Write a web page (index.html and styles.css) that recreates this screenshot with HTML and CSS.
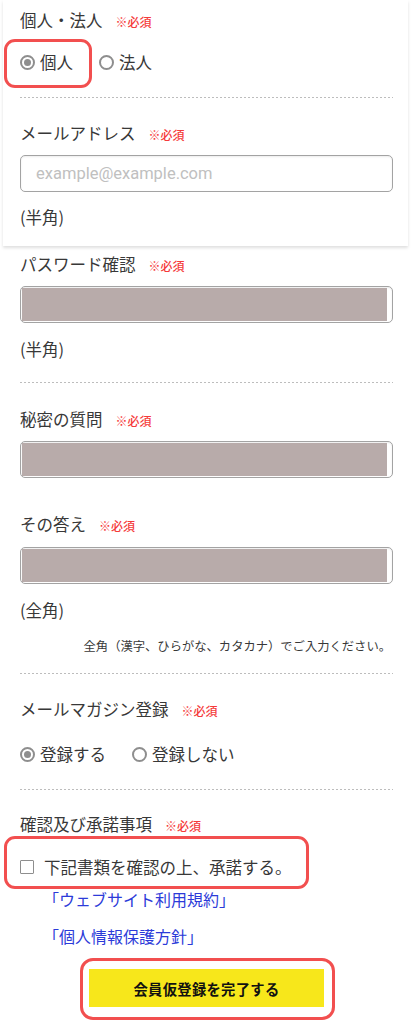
FILE: index.html
```html
<!DOCTYPE html>
<html lang="ja">
<head>
<meta charset="utf-8">
<link rel="stylesheet" href="styles.css">
</head>
<body>
<div class="card">
  <div class="label">個人・法人<span class="req">※必須</span></div>
  <div class="radios r1">
    <span class="hl hl-kojin"></span>
    <span class="opt"><span class="radio on"></span>個人</span>
    <span class="opt"><span class="radio"></span>法人</span>
  </div>
  <div class="dash d1"></div>
  <div class="label">メールアドレス<span class="req">※必須</span></div>
  <div class="input email"><span class="ph">example@example.com</span></div>
  <div class="hint">(半角)</div>
</div>
<div class="form">
  <div class="label l-pw">パスワード確認<span class="req">※必須</span></div>
  <div class="input"><div class="fill"></div></div>
  <div class="hint">(半角)</div>
  <div class="dash d2"></div>
  <div class="label l-q">秘密の質問<span class="req">※必須</span></div>
  <div class="input sel"><div class="fill"></div></div>
  <div class="label l-a">その答え<span class="req">※必須</span></div>
  <div class="input a"><div class="fill"></div></div>
  <div class="hint">(全角)</div>
  <div class="note">全角（漢字、ひらがな、カタカナ）でご入力ください。</div>
  <div class="dash d3"></div>
  <div class="label l-mm">メールマガジン登録<span class="req">※必須</span></div>
  <div class="radios r2">
    <span class="opt"><span class="radio on"></span>登録する</span>
    <span class="opt"><span class="radio"></span>登録しない</span>
  </div>
  <div class="dash d4"></div>
  <div class="label l-c">確認及び承諾事項<span class="req">※必須</span></div>
  <div class="check">
    <span class="hl hl-check"></span>
    <span class="box"></span>下記書類を確認の上、承諾する。
  </div>
  <div class="link l1">「ウェブサイト利用規約」</div>
  <div class="link l2">「個人情報保護方針」</div>
  <div class="btnwrap">
    <span class="hl hl-btn"></span>
    <div class="btn">会員仮登録を完了する</div>
  </div>
</div>
</body>
</html>
```
FILE: styles.css
```css
html, body {
  margin: 0;
  padding: 0;
  background: #fff;
}
body {
  width: 411px;
  height: 1024px;
  overflow: hidden;
  font-family: "Noto Sans CJK JP", "Noto Sans", sans-serif;
  color: #383838;
}
.card {
  margin: 0 3px;
  padding: 8px 15px 17px 17px;
  background: #fff;
  box-shadow: 0 2px 3px rgba(0, 0, 0, 0.13);
}
.form {
  padding: 6px 18px 0 20px;
}
.label {
  font-size: 16.5px;
  line-height: 24px;
  height: 24px;
  white-space: nowrap;
}
.req {
  color: #f53a3a;
  font-size: 12px;
  margin-left: 13px;
  font-weight: 500;
}
.radios {
  position: relative;
  display: flex;
  gap: 26px;
  font-size: 16.5px;
  line-height: 24px;
  height: 24px;
}
.r1 { margin-top: 18px; }
.r2 { margin-top: 21px; }
.opt {
  display: flex;
  align-items: center;
  gap: 5px;
}
.radio {
  width: 15px;
  height: 15px;
  box-sizing: border-box;
  border: 2px solid #8e8e8e;
  border-radius: 50%;
  display: flex;
  align-items: center;
  justify-content: center;
}
.radio.on::after {
  content: "";
  width: 7px;
  height: 7px;
  border-radius: 50%;
  background: #8e8e8e;
}
.hl {
  position: absolute;
  border: 3px solid #f24f4f;
  border-radius: 11px;
  box-sizing: border-box;
  pointer-events: none;
}
.hl-kojin {
  left: -16px;
  top: -11px;
  width: 88px;
  height: 49px;
}
.dash {
  height: 1px;
  background: repeating-linear-gradient(to right, #bdbdbd 0 2px, transparent 2px 4px);
}
.d1 { margin-top: 23px; margin-bottom: 23px; }
.d2 { margin-top: 21px; margin-bottom: 24px; }
.d3 { margin-top: 18px; margin-bottom: 23px; }
.d4 { margin-top: 23px; margin-bottom: 22px; }
.input {
  margin-top: 10px;
  height: 37px;
  box-sizing: border-box;
  border: 1.5px solid #a3a3a3;
  border-radius: 5px;
  background: #fff;
  padding: 1px 5px 1px 1px;
  box-shadow: inset 0 1px 2px rgba(0, 0, 0, 0.08);
}
.input.a { margin-top: 11px; }
.fill {
  height: 100%;
  background: #b8abaa;
}
.email {
  padding: 0 0 0 15px;
  display: flex;
  align-items: center;
}
.ph {
  font-family: Roboto, "Noto Sans", sans-serif;
  font-size: 16.5px;
  color: #c0c0c0;
}
.hint {
  margin-top: 13px;
  font-size: 16.5px;
  line-height: 24px;
}
.form .hint { margin-top: 14px; }
.l-a { margin-top: 34px; }
.note {
  margin-top: 15px;
  text-align: right;
  font-size: 12.3px;
  line-height: 18px;
  padding-right: 2px;
  white-space: nowrap;
}
.check {
  position: relative;
  margin-top: 19px;
  display: flex;
  align-items: center;
  font-size: 16.5px;
  line-height: 24px;
  height: 24px;
}
.box {
  width: 14px;
  height: 14px;
  box-sizing: border-box;
  border: 1px solid #8e8e8e;
  border-radius: 1px;
  margin-right: 10px;
}
.hl-check {
  left: -16px;
  top: -19px;
  width: 305px;
  height: 53px;
}
.link {
  color: #2c3bd9;
  font-size: 16px;
  line-height: 24px;
  padding-left: 23px;
}
.l1 { margin-top: 8px; }
.l2 { margin-top: 13px; }
.btnwrap {
  position: relative;
  width: 235px;
  margin: 21px auto 0;
}
.btn {
  height: 38px;
  background: #f7e71b;
  color: #111;
  font-weight: bold;
  font-size: 14.3px;
  display: flex;
  align-items: center;
  justify-content: center;
  letter-spacing: 0.3px;
}
.hl-btn {
  left: -9px;
  top: -11px;
  width: 255px;
  height: 62px;
  border-radius: 13px;
}
```
